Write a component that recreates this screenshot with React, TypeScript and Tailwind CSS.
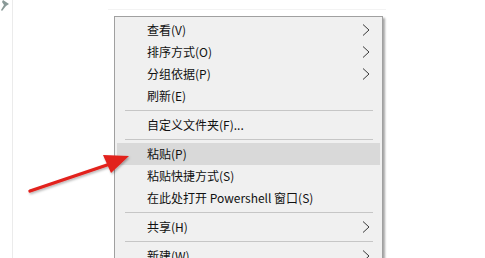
import React from "react";

type Item = { label: string; sub?: boolean; hl?: boolean } | { sep: true };

const items: Item[] = [
  { label: "查看(V)", sub: true },
  { label: "排序方式(O)", sub: true },
  { label: "分组依据(P)", sub: true },
  { label: "刷新(E)" },
  { sep: true },
  { label: "自定义文件夹(F)..." },
  { sep: true },
  { label: "粘贴(P)", hl: true },
  { label: "粘贴快捷方式(S)" },
  { label: "在此处打开 Powershell 窗口(S)" },
  { sep: true },
  { label: "共享(H)", sub: true },
  { sep: true },
  { label: "新建(W)", sub: true },
];

function Chevron() {
  return (
    <svg width="8" height="12" viewBox="0 0 8 12" className="absolute right-[10px] top-[5px]">
      <path d="M1 0.5 L7 6 L1 11.5" fill="none" stroke="#3a3a3a" strokeWidth="1" />
    </svg>
  );
}

export default function App() {
  return (
    <div
      className="relative w-[485px] h-[258px] overflow-hidden bg-white"
      style={{ fontFamily: '"Noto Sans CJK SC", "Noto Sans", sans-serif' }}
    >
      {/* left vertical line */}
      <div className="absolute left-[12px] top-0 h-full w-px bg-[#ebebeb]" />
      {/* pin icon */}
      <svg className="absolute left-0 top-0" width="10" height="12" viewBox="0 0 10 12">
        <path d="M3 0 L9 4 L6 6 L2 11 L1 10 L4 5 L2 2 Z" fill="#8a9a98" />
      </svg>
      {/* faint top line */}
      <div className="absolute left-[108px] top-[9px] w-[278px] h-px bg-[#f3f3f3]" />

      {/* context menu */}
      <div className="absolute left-[114px] top-[16px] w-[269px] h-[300px] bg-[#f0f0f0] border border-[#a0a0a0] shadow-[2px_2px_2px_rgba(0,0,0,0.35)] pt-[2px] px-[2px]">
        {items.map((it, i) =>
          "sep" in it ? (
            <div key={i} className="h-[7px] flex items-center pl-[8px] pr-[7px]">
              <div className="w-full h-px bg-[#c6c6c6]" />
            </div>
          ) : (
            <div
              key={i}
              className={`relative h-[22px] flex items-center pl-[30px] text-[12px] leading-none text-[#111] ${
                it.hl ? "bg-[#d9d9d9]" : ""
              }`}
            >
              <span>{it.label}</span>
              {it.sub && <Chevron />}
            </div>
          )
        )}
      </div>

      {/* red arrow */}
      <svg className="absolute left-0 top-0" width="485" height="258" viewBox="0 0 485 258">
        <defs>
          <filter id="sh" x="-20%" y="-20%" width="140%" height="140%">
            <feDropShadow dx="1" dy="1.5" stdDeviation="1" floodColor="#000" floodOpacity="0.3" />
          </filter>
        </defs>
        <g filter="url(#sh)">
          <line x1="30" y1="191" x2="110" y2="164" stroke="#e2201c" strokeWidth="3.4" strokeLinecap="round" />
          <polygon points="129,156 111,173 103,155" fill="#e2201c" />
        </g>
      </svg>
    </div>
  );
}
